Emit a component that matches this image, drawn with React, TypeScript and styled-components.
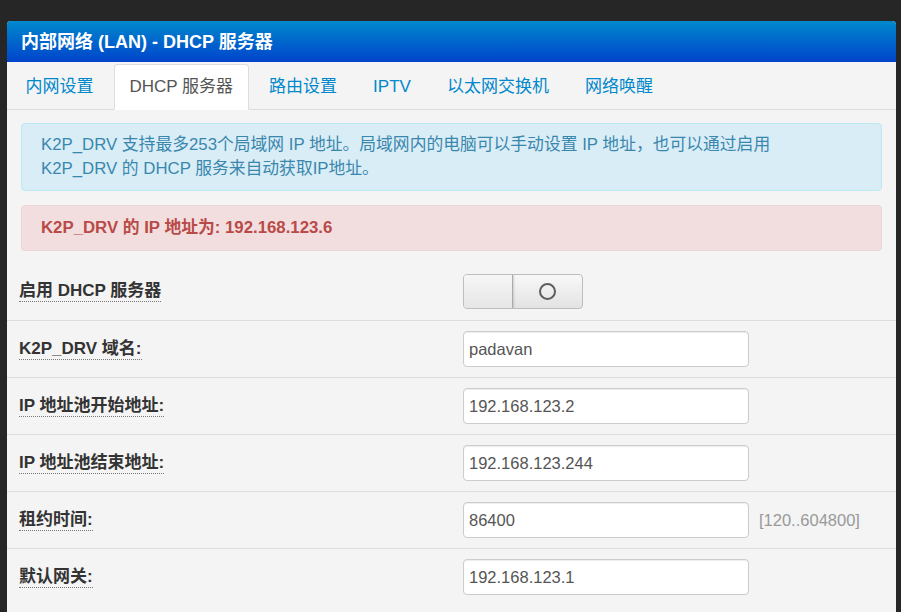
import React from "react";
import styled, { createGlobalStyle } from "styled-components";

const Global = createGlobalStyle`
  html, body { margin: 0; padding: 0; background: #262626; }
  body { font-family: "Liberation Sans", "Noto Sans CJK SC", sans-serif; font-size: 17px; }
  * { box-sizing: border-box; }
`;

const Page = styled.div`
  padding: 21px 5px 0 7px;
  height: 612px;
  overflow: hidden;
`;

const Panel = styled.div`
  background: #f4f4f4;
  border-radius: 4px 4px 0 0;
  min-height: 600px;
`;

const Header = styled.div`
  height: 41px;
  display: flex;
  align-items: center;
  padding-left: 14px;
  border-radius: 4px 4px 0 0;
  background: linear-gradient(to bottom, #0088cc, #0044cc);
  color: #fff;
  font-weight: bold;
  font-size: 18px;
  line-height: 22px;
`;

const TabBar = styled.div`
  display: flex;
  gap: 5px;
  height: 48px;
  padding: 2px 0 0 3px;
  border-bottom: 1px solid #ddd;
`;

const Tab = styled.div<{ $active?: boolean }>`
  height: 46px;
  padding: 0 14.5px;
  display: flex;
  align-items: center;
  line-height: 20px;
  border: 1px solid ${(p) => (p.$active ? "#ddd" : "transparent")};
  border-bottom-color: transparent;
  border-radius: 4px 4px 0 0;
  background: ${(p) => (p.$active ? "#fff" : "transparent")};
  color: ${(p) => (p.$active ? "#555" : "#0088cc")};
  white-space: nowrap;
`;

const Content = styled.div`
  padding: 13px 14px 0 14px;
`;

const Alert = styled.div<{ $kind: "info" | "danger" }>`
  border: 1px solid ${(p) => (p.$kind === "info" ? "#bce8f1" : "#eed3d7")};
  background: ${(p) => (p.$kind === "info" ? "#d9edf7" : "#f2dede")};
  color: ${(p) => (p.$kind === "info" ? "#3a87ad" : "#b94a48")};
  font-weight: ${(p) => (p.$kind === "info" ? "normal" : "bold")};
  font-size: 16.8px;
  border-radius: 4px;
  padding: ${(p) => (p.$kind === "info" ? "9px 19px" : "10px 19px")};
  line-height: 24px;
  margin-bottom: ${(p) => (p.$kind === "info" ? "14px" : "12px")};
  white-space: nowrap;
`;

const Form = styled.div`
  margin: 0 -14px;
`;

const Row = styled.div<{ $first?: boolean }>`
  display: grid;
  grid-template-columns: 456px 1fr;
  align-items: center;
  height: 57px;
  border-top: ${(p) => (p.$first ? "none" : "1px solid #ddd")};
`;

const LabelCell = styled.div`
  padding-left: 12px;
`;

const Label = styled.span`
  display: inline-block;
  font-weight: bold;
  color: #333;
  line-height: 20px;
  border-bottom: 1px dotted #777;
`;

const Control = styled.div`
  display: flex;
  align-items: center;
`;

const Input = styled.input`
  width: 286px;
  height: 36px;
  padding: 0 5px;
  border: 1px solid #ccc;
  border-radius: 4px;
  background: #fff;
  color: #555;
  font-family: "Liberation Sans", "Noto Sans CJK SC", sans-serif;
  font-size: 16.5px;
  box-shadow: inset 0 1px 1px rgba(0, 0, 0, 0.075);
  outline: none;
`;

const Hint = styled.span`
  margin-left: 10px;
  color: #999;
  font-size: 16.5px;
`;

const Switch = styled.div`
  display: flex;
  width: 120px;
  height: 35px;
  border: 1px solid #bdbdbd;
  border-radius: 4px;
  overflow: hidden;
  background: linear-gradient(to bottom, #f8f8f8, #e3e3e3);
`;

const SwitchSide = styled.div`
  width: 49px;
  border-right: 1px solid #aaa;
  box-shadow: 1px 0 2px rgba(0, 0, 0, 0.15);
  background: linear-gradient(to bottom, #f6f6f6, #e6e6e6);
`;

const SwitchKnob = styled.div`
  flex: 1;
  display: flex;
  align-items: center;
  justify-content: center;
`;

const Ring = styled.div`
  width: 17px;
  height: 17px;
  border-radius: 50%;
  border: 2.5px solid #5e5e5e;
`;

const tabs = ["内网设置", "DHCP 服务器", "路由设置", "IPTV", "以太网交换机", "网络唤醒"];

const fields: { label: string; value: string; hint?: string }[] = [
  { label: "K2P_DRV 域名:", value: "padavan" },
  { label: "IP 地址池开始地址:", value: "192.168.123.2" },
  { label: "IP 地址池结束地址:", value: "192.168.123.244" },
  { label: "租约时间:", value: "86400", hint: "[120..604800]" },
  { label: "默认网关:", value: "192.168.123.1" },
];

export default function App() {
  return (
    <Page>
      <Global />
      <Panel>
        <Header>内部网络 (LAN) - DHCP 服务器</Header>
        <TabBar>
          {tabs.map((t, i) => (
            <Tab key={t} $active={i === 1}>
              {t}
            </Tab>
          ))}
        </TabBar>
        <Content>
          <Alert $kind="info">
            K2P_DRV 支持最多253个局域网 IP 地址。局域网内的电脑可以手动设置 IP 地址，也可以通过启用
            <br />
            K2P_DRV 的 DHCP 服务来自动获取IP地址。
          </Alert>
          <Alert $kind="danger">K2P_DRV 的 IP 地址为: 192.168.123.6</Alert>
          <Form>
            <Row $first>
              <LabelCell>
                <Label>启用 DHCP 服务器</Label>
              </LabelCell>
              <Control>
                <Switch>
                  <SwitchSide />
                  <SwitchKnob>
                    <Ring />
                  </SwitchKnob>
                </Switch>
              </Control>
            </Row>
            {fields.map((f) => (
              <Row key={f.label}>
                <LabelCell>
                  <Label>{f.label}</Label>
                </LabelCell>
                <Control>
                  <Input defaultValue={f.value} />
                  {f.hint && <Hint>{f.hint}</Hint>}
                </Control>
              </Row>
            ))}
          </Form>
        </Content>
      </Panel>
    </Page>
  );
}
